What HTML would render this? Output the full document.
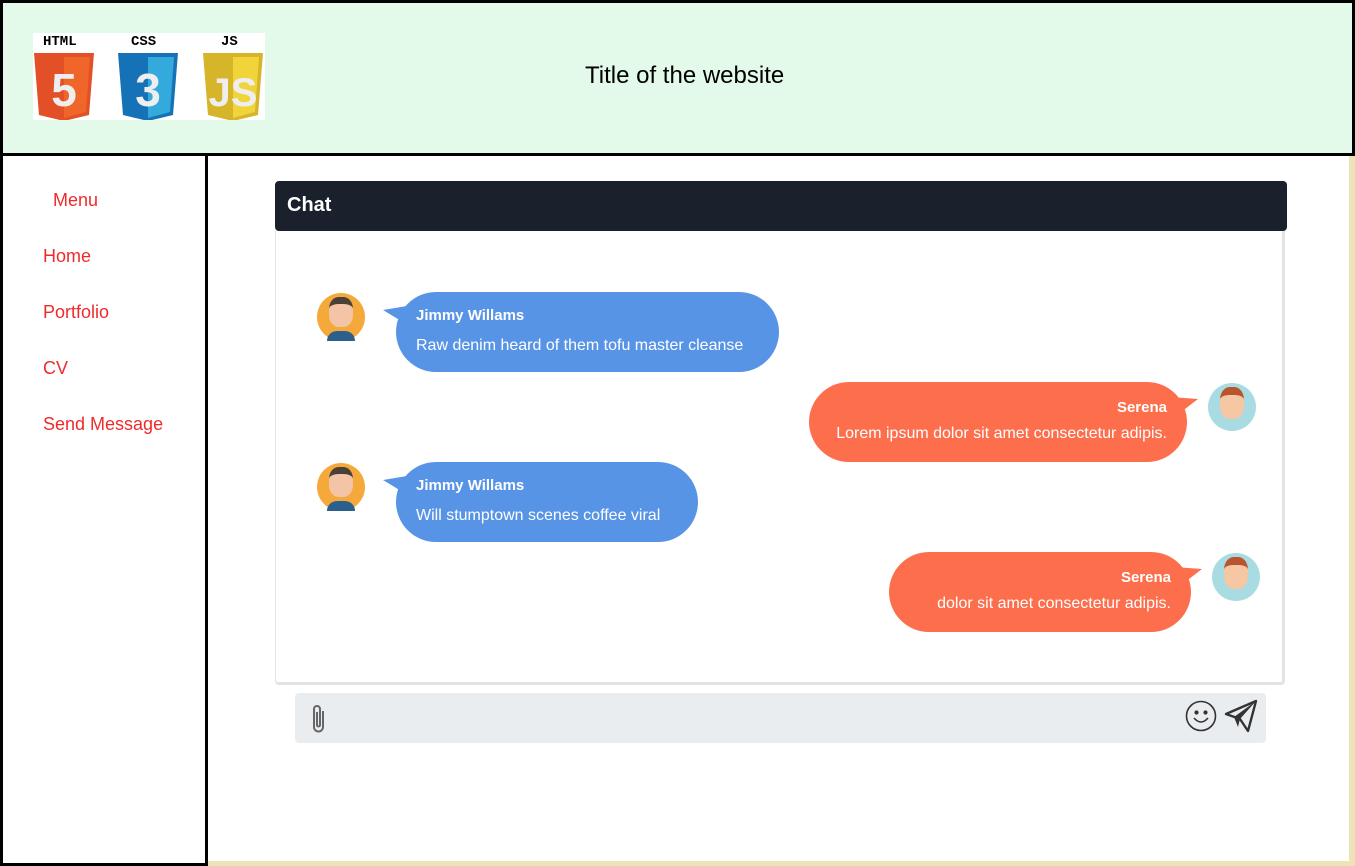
<!DOCTYPE html>
<html><head><meta charset="utf-8"><style>
*{box-sizing:border-box;margin:0;padding:0}
body{width:1355px;height:866px;position:relative;font-family:"Liberation Sans",Arial,sans-serif;background:#fff;overflow:hidden}
.hdr{position:absolute;left:0;top:0;width:1355px;height:156px;background:#e3f9ea;border:3px solid #000}
.title{position:absolute;left:582px;top:59px;font-size:24px;color:#000}
.logos{position:absolute;left:33px;top:33px;width:232px;height:87px;background:#fff}
.side{position:absolute;left:0;top:153px;width:208px;height:713px;border:3px solid #000;border-top:none}
.side a{position:absolute;color:#f02a2a;font-size:18px;text-decoration:none}
.main{position:absolute;left:208px;top:156px;width:1147px;height:710px;border-right:6px solid #ece4b7;border-bottom:5px solid #ece4b7}
.chh{position:absolute;left:275px;top:181px;width:1012px;height:50px;background:#1a202c;border-radius:4px;color:#fff;font-weight:bold;font-size:20px;padding:13px 12px}
.box{position:absolute;left:275px;top:231px;width:1010px;height:454px;border:3px solid #e3e3e3;border-top:none;border-radius:0 0 4px 4px;border-left-width:1px}
.b{position:absolute;height:80px;border-radius:40px;color:#fff;font-size:16px}
.bl{background:#5894e6;padding:15px 20px}
.br{background:#fd6e4c;padding:17px 20px;text-align:right}
.bl b{display:block;font-size:15px;margin-bottom:13px}
.br b{display:block;font-size:15px;margin-bottom:9px}
.av{position:absolute;width:48px;height:48px;border-radius:50%}
.inp{position:absolute;left:295px;top:693px;width:971px;height:50px;background:#eaedf0;border-radius:4px}
</style></head><body>
<div class="hdr"><div class="title">Title of the website</div></div>
<div class="logos">
<svg width="232" height="87">
<g font-family="Liberation Mono,monospace" font-weight="bold" font-size="14" fill="#000"><text x="10" y="12">HTML</text><text x="98" y="12">CSS</text><text x="188" y="12">JS</text></g>
<path d="M1 20h60l-5 62-25 6-25-6z" fill="#e34f26"/><path d="M31 24h26l-4 55-22 6z" fill="#ef652a"/>
<text x="31" y="73" text-anchor="middle" font-size="46" font-weight="bold" fill="#eee" font-family="Liberation Sans">5</text>
<path d="M85 20h60l-5 62-25 6-25-6z" fill="#1572b6"/><path d="M115 24h26l-4 55-22 6z" fill="#33a9dc"/>
<text x="115" y="73" text-anchor="middle" font-size="46" font-weight="bold" fill="#eee" font-family="Liberation Sans">3</text>
<path d="M170 20h60l-5 62-25 6-25-6z" fill="#d6b52a"/><path d="M200 24h26l-4 55-22 6z" fill="#f0d43a"/>
<text x="200" y="73" text-anchor="middle" font-size="40" font-weight="bold" fill="#eee" font-family="Liberation Sans">JS</text>
</svg></div>
<div class="side">
<a style="left:50px;top:37px">Menu</a><a style="left:40px;top:93px">Home</a><a style="left:40px;top:149px">Portfolio</a><a style="left:40px;top:205px">CV</a><a style="left:40px;top:261px">Send Message</a>
</div>
<div class="main"></div>
<div class="chh">Chat</div>
<div class="box"></div>
<div class="av" style="left:317px;top:293px;background:#f5a93a"><div style="position:absolute;left:12px;top:4px;width:24px;height:30px;border-radius:40%;background:#f3c4a5;border-top:7px solid #4a4038"></div><div style="position:absolute;left:10px;top:38px;width:28px;height:10px;border-radius:10px 10px 0 0;background:#2b5f8c"></div></div>
<div class="av" style="left:317px;top:463px;background:#f5a93a"><div style="position:absolute;left:12px;top:4px;width:24px;height:30px;border-radius:40%;background:#f3c4a5;border-top:7px solid #4a4038"></div><div style="position:absolute;left:10px;top:38px;width:28px;height:10px;border-radius:10px 10px 0 0;background:#2b5f8c"></div></div>
<div class="av" style="left:1208px;top:383px;background:#a9dbe3"><div style="position:absolute;left:12px;top:4px;width:24px;height:32px;border-radius:40%;background:#f5c7a3;border-top:8px solid #b9552e"></div></div>
<div class="av" style="left:1212px;top:553px;background:#a9dbe3"><div style="position:absolute;left:12px;top:4px;width:24px;height:32px;border-radius:40%;background:#f5c7a3;border-top:8px solid #b9552e"></div></div>
<svg style="position:absolute;left:383px;top:305px" width="30" height="25"><path d="M0 5L30 0 28 22z" fill="#5894e6"/></svg>
<svg style="position:absolute;left:383px;top:475px" width="30" height="25"><path d="M0 5L30 0 28 22z" fill="#5894e6"/></svg>
<svg style="position:absolute;left:1170px;top:397px" width="30" height="25"><path d="M28 2L0 0 2 22z" fill="#fd6e4c"/></svg>
<svg style="position:absolute;left:1174px;top:567px" width="30" height="25"><path d="M28 2L0 0 2 22z" fill="#fd6e4c"/></svg>
<div class="b bl" style="left:396px;top:292px;width:383px"><b>Jimmy Willams</b>Raw denim heard of them tofu master cleanse</div>
<div class="b br" style="left:809px;top:382px;width:378px"><b>Serena</b>Lorem ipsum dolor sit amet consectetur adipis.</div>
<div class="b bl" style="left:396px;top:462px;width:302px"><b>Jimmy Willams</b>Will stumptown scenes coffee viral</div>
<div class="b br" style="left:889px;top:552px;width:302px"><b>Serena</b>dolor sit amet consectetur adipis.</div>
<div class="inp">
<svg style="position:absolute;left:12px;top:9px" width="24" height="34" fill="none" stroke="#666" stroke-width="2"><path d="M16 9v16a4.5 4.5 0 0 1-9 0V7a3 3 0 0 1 6 0v16a1.5 1.5 0 0 1-3 0V10"/></svg>
<svg style="position:absolute;left:890px;top:7px" width="32" height="32" fill="none" stroke="#333" stroke-width="1.6"><circle cx="16" cy="16" r="14.5"/><circle cx="11.5" cy="12.5" r="1.3" fill="#333"/><circle cx="20.5" cy="12.5" r="1.3" fill="#333"/><path d="M9 18q7 8 14 0"/></svg>
<svg style="position:absolute;left:929px;top:6px" width="34" height="34"><path d="M2 15L32 2 24 32 16 20z" fill="none" stroke="#333" stroke-width="2.4" stroke-linejoin="round"/><path d="M16 20L32 2 10 18 14 28z" fill="#333"/></svg>
</div>
</body></html>
